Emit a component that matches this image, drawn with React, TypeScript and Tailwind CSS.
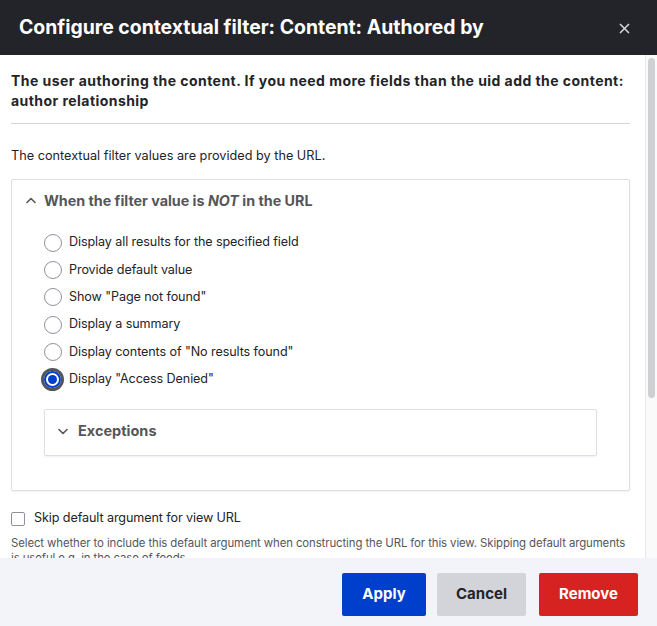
import { useState } from 'react';

const opciones = [
  'Display all results for the specified field',
  'Provide default value',
  'Show "Page not found"',
  'Display a summary',
  'Display contents of "No results found"',
  'Display "Access Denied"',
];

function Radio({ checked }: { checked: boolean }) {
  if (checked) {
    return (
      <span className="flex h-[23px] w-[23px] items-center justify-center rounded-full border-[3px] border-[#55565b]">
        <span className="flex h-[17px] w-[17px] items-center justify-center rounded-full border-2 border-[#003ecc] bg-white">
          <span className="h-[9px] w-[9px] rounded-full bg-[#003ecc]" />
        </span>
      </span>
    );
  }
  return (
    <span className="flex h-[23px] w-[23px] items-center justify-center">
      <span className="h-[18px] w-[18px] rounded-full border border-[#8e929c] bg-white" />
    </span>
  );
}

function Chevron({ up }: { up?: boolean }) {
  return (
    <svg width="10" height="7" viewBox="0 0 10 7" fill="none" className="shrink-0">
      <path
        d={up ? 'M1 5.5 L5 1.5 L9 5.5' : 'M1 1.5 L5 5.5 L9 1.5'}
        stroke="#55565b"
        strokeWidth="1.6"
        strokeLinecap="round"
        strokeLinejoin="round"
      />
    </svg>
  );
}

export default function App() {
  const [seleccion, setSeleccion] = useState(5);

  return (
    <div className="flex h-[626px] w-[657px] flex-col overflow-hidden bg-white font-['Inter',sans-serif] text-[#232429]">
      {/* cabecera */}
      <div className="flex h-[55px] shrink-0 items-center justify-between bg-[#232429] pl-[19px] pr-[27px]">
        <h1 className="text-[19.4px] font-bold text-white">
          Configure contextual filter: Content: Authored by
        </h1>
        <svg width="11" height="11" viewBox="0 0 11 11" className="mt-[1px]">
          <path d="M1 1 L10 10 M10 1 L1 10" stroke="#d8d9dc" strokeWidth="1.5" />
        </svg>
      </div>

      {/* cuerpo con scroll */}
      <div className="flex min-h-0 flex-1">
        <div className="min-w-0 flex-1 overflow-hidden pl-[11px] pr-[13px] pt-[16px]">
          <p className="pr-[2px] text-[14px] font-bold leading-[20px] tracking-[0.45px]">
            The user authoring the content. If you need more fields than the uid add the content: author relationship
          </p>
          <div className="mr-[2px] mt-[12px] h-px bg-[#d3d4d9]" />
          <p className="mt-[22px] text-[12.7px] leading-[20px]">
            The contextual filter values are provided by the URL.
          </p>

          <div className="mr-[2px] mt-[13px] rounded-[2px] border border-[#dedfe4] shadow-[0_1px_2px_rgba(0,0,0,0.06)]">
            <div className="flex h-[40px] items-center gap-[8px] pl-[14px] pt-[1px]">
              <Chevron up />
              <span className="text-[14.3px] font-bold text-[#55565b]">
                When the filter value is <em>NOT</em> in the URL
              </span>
            </div>
            <div className="px-[32px] pb-[34px] pt-[9px]">
              <div className="-ml-[3px] flex flex-col">
                {opciones.map((op, i) => (
                  <label
                    key={op}
                    className="flex h-[27.4px] cursor-pointer items-center gap-[5px] text-[12.6px] tracking-[-0.1px]"
                    onClick={() => setSeleccion(i)}
                  >
                    <Radio checked={seleccion === i} />
                    <span>{op}</span>
                  </label>
                ))}
              </div>
              <div className="mt-[16px] flex h-[47px] items-center gap-[10px] rounded-[2px] border border-[#dedfe4] pb-[3px] pl-[13px] shadow-[0_1px_2px_rgba(0,0,0,0.06)]">
                <Chevron />
                <span className="text-[14.5px] font-bold text-[#55565b]">Exceptions</span>
              </div>
            </div>
          </div>

          <label className="mt-[18px] flex items-center gap-[9px] text-[12.6px] tracking-[-0.1px]">
            <span className="h-[14px] w-[14px] rounded-[2px] border border-[#8e929c] bg-white" />
            Skip default argument for view URL
          </label>
          <p className="mt-[8px] text-[11.4px] leading-[15px] tracking-[-0.1px] text-[#55565b]">
            Select whether to include this default argument when constructing the URL for this view. Skipping default arguments is useful e.g. in the case of feeds.
          </p>
        </div>
        {/* barra de scroll */}
        <div className="w-[12px] shrink-0 border-l border-[#e6e7eb] bg-[#fafafb] py-[3px] pl-[2px] pr-[2px]">
          <div className="h-[340px] rounded-full bg-[#cfd0d4]" />
        </div>
      </div>

      {/* pie */}
      <div className="flex h-[68px] shrink-0 items-center justify-end gap-[11px] bg-[#f3f4f9] pr-[19px] pt-[5px]">
        <button className="h-[43px] w-[84px] rounded-[2px] bg-[#003ecc] text-[15px] font-bold text-white">Apply</button>
        <button className="h-[43px] w-[89px] rounded-[2px] bg-[#d3d4d9] text-[15px] font-bold text-[#232429]">Cancel</button>
        <button className="ml-[2px] h-[43px] w-[99px] rounded-[2px] bg-[#d72222] text-[15px] font-bold text-white">Remove</button>
      </div>
    </div>
  );
}
